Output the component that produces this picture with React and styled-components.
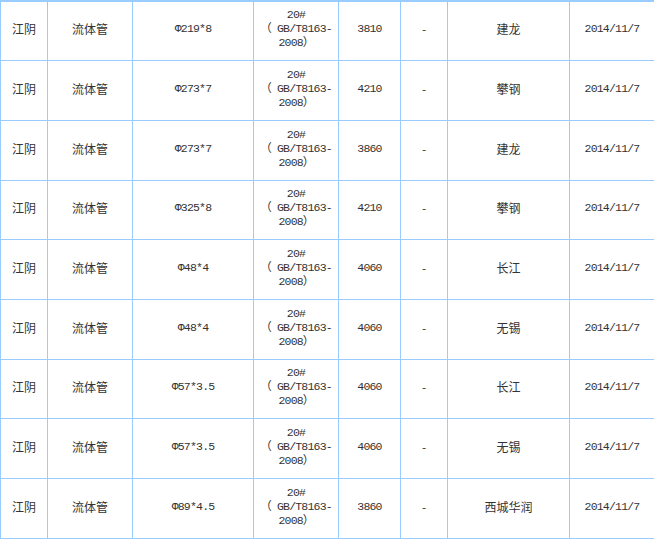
import styled, { createGlobalStyle } from "styled-components";

const GlobalStyle = createGlobalStyle`
  html, body {
    margin: 0;
    padding: 0;
    background: #fff;
  }
`;

const Table = styled.table`
  width: 654px;
  border-collapse: collapse;
  table-layout: fixed;
  border-top: 2px solid #99ccff;
  font-family: "Noto Sans CJK SC", "Liberation Sans", sans-serif;
  font-size: 12px;
  color: #333;
`;

const Row = styled.tr`
  height: ${(props) => props.h}px;
`;

const Cell = styled.td`
  border: 1px solid #99ccff;
  padding: 0 4px 3px;
  text-align: center;
  vertical-align: middle;
  line-height: 14px;
  overflow: hidden;
  ${(props) =>
    props.mono &&
    `
    font-family: "Liberation Mono", "Noto Sans CJK SC", monospace;
    font-size: 11.5px;
    letter-spacing: -0.8px;
  `}
`;

const widths = [47, 85, 121, 85, 62, 47, 122, 85];

const rows = [
  ["Φ219*8", "3810", "建龙"],
  ["Φ273*7", "4210", "攀钢"],
  ["Φ273*7", "3860", "建龙"],
  ["Φ325*8", "4210", "攀钢"],
  ["Φ48*4", "4060", "长江"],
  ["Φ48*4", "4060", "无锡"],
  ["Φ57*3.5", "4060", "长江"],
  ["Φ57*3.5", "4060", "无锡"],
  ["Φ89*4.5", "3860", "西城华润"],
];

const heights = [59, 60, 60, 59, 60, 60, 59, 60, 60];

const App = () => {
  return (
    <>
      <GlobalStyle />
      <Table>
        <colgroup>
          {widths.map((w, i) => (
            <col key={i} style={{ width: w }} />
          ))}
        </colgroup>
        <tbody>
          {rows.map(([spec, price, mill], i) => (
            <Row key={i} h={heights[i]}>
              <Cell>江阴</Cell>
              <Cell>流体管</Cell>
              <Cell mono>{spec}</Cell>
              <Cell mono>
                20#
                <br />
                （ GB/T8163-
                <br />
                2008）
              </Cell>
              <Cell mono>{price}</Cell>
              <Cell>-</Cell>
              <Cell>{mill}</Cell>
              <Cell mono>2014/11/7</Cell>
            </Row>
          ))}
        </tbody>
      </Table>
    </>
  );
};

export default App;
